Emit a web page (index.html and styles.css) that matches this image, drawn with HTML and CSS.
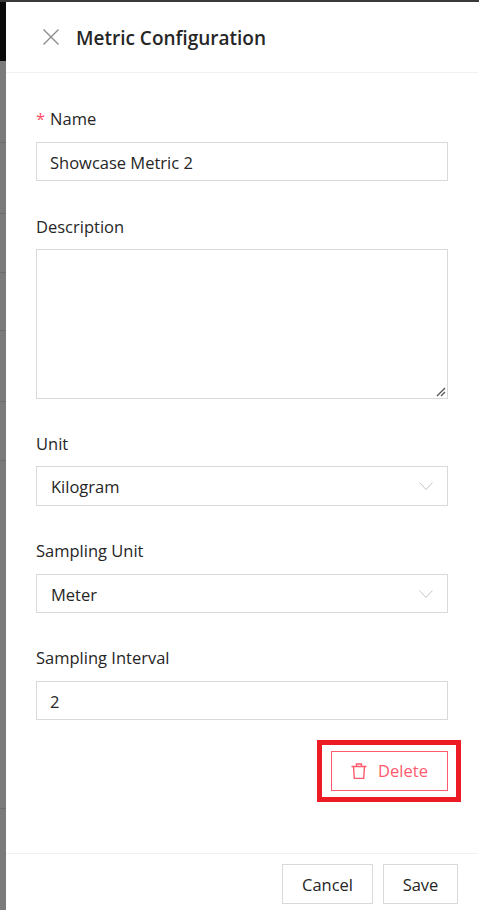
FILE: index.html
```html
<!DOCTYPE html>
<html lang="en">
<head>
<meta charset="utf-8">
<title>Metric Configuration</title>
<link rel="stylesheet" href="styles.css">
</head>
<body>
<div class="backdrop">
  <div class="backdrop-top"></div>
  <div class="backdrop-row r1"></div>
  <div class="backdrop-row r2"></div>
  <div class="backdrop-row r3"></div>
  <div class="backdrop-row r4"></div>
  <div class="backdrop-row r5"></div>
  <div class="backdrop-row r6"></div>
  <div class="backdrop-row r7"></div>
</div>
<aside class="panel">
  <header class="panel-head">
    <svg class="close" viewBox="0 0 16 16" width="16" height="16"><path d="M.5.5l15 15M15.500.5l-15 15" fill="none" stroke="#8c8c8c" stroke-width="1.400"/></svg>
    <h1>Metric Configuration</h1>
  </header>
  <form class="form">
    <div class="field">
      <label><span class="req">*</span>Name</label>
      <div class="control">Showcase Metric 2</div>
    </div>
    <div class="field">
      <label>Description</label>
      <div class="control area">
        <svg class="grip" viewBox="0 0 10 10" width="10" height="10"><path d="M1 9l8-8M5 9l4-4" fill="none" stroke="#555" stroke-width="1.300"/></svg>
      </div>
    </div>
    <div class="field">
      <label>Unit</label>
      <div class="control select">Kilogram
        <svg class="chev" viewBox="0 0 14 8" width="14" height="8"><path d="M.5.500l6.500 7 6.500-7" fill="none" stroke="#c4c4c4" stroke-width="1"/></svg>
      </div>
    </div>
    <div class="field">
      <label>Sampling Unit</label>
      <div class="control select">Meter
        <svg class="chev" viewBox="0 0 14 8" width="14" height="8"><path d="M.5.500l6.500 7 6.500-7" fill="none" stroke="#c4c4c4" stroke-width="1"/></svg>
      </div>
    </div>
    <div class="field last">
      <label>Sampling Interval</label>
      <div class="control">2</div>
    </div>
    <div class="delete-row">
      <button type="button" class="btn danger">
        <svg viewBox="0 0 16 16" width="16" height="16"><path d="M.5 3.500h15M5.500 3.500V1h5v2.500M2.500 3.500l.8 12h9.400l.8-12" fill="none" stroke="#ff5a6e" stroke-width="1.400"/></svg>
        Delete
      </button>
      <div class="annotation"></div>
    </div>
  </form>
  <footer class="panel-foot">
    <button type="button" class="btn cancel">Cancel</button>
    <button type="button" class="btn save">Save</button>
  </footer>
</aside>
</body>
</html>
```
FILE: styles.css
```css
* { box-sizing: border-box; }
html, body { margin: 0; height: 910px; overflow: hidden; }
body {
  display: flex;
  font-family: "Open Sans", "Noto Sans", sans-serif;
  font-size: 16.500px;
  color: #262626;
  background: #fff;
}
body::before {
  content: "";
  position: absolute;
  left: 0; top: 0; right: 0;
  height: 2px;
  background: #3a3a3a;
}
.backdrop {
  width: 6px;
  flex: none;
  background: #7b7b7b;
}
.backdrop-top { height: 61px; background: #0a0a0a; }
.backdrop-row { border-bottom: 1px solid #6c6c6c; }
.r1 { height: 82px; }
.r2 { height: 71px; }
.r3 { height: 59px; }
.r4 { height: 58px; }
.r5 { height: 71px; }
.r6 { height: 59px; }
.r7 { height: 348px; }
.panel {
  width: 472px;
  flex: none;
  height: 908px;
  margin-top: 2px;
  background: #fff;
  display: flex;
  flex-direction: column;
}
.panel-head {
  height: 71px;
  flex: none;
  display: flex;
  align-items: center;
  padding-left: 37px;
  border-bottom: 1px solid #f0f0f0;
}
.close { margin-right: 17px; }
h1 { margin: 2px 0 0; font-size: 19px; font-weight: 600; color: #262626; }
.form { flex: 1; padding: 33.300px 30px 0; }
.field { margin-bottom: 32.300px; }
.field label { display: block; height: 24px; line-height: 26px; margin-bottom: 11.500px; }
.req { color: #ff4d64; margin-right: 5px; }
.control {
  position: relative;
  height: 39.500px;
  line-height: 39px;
  padding: 0 13px;
  border: 1px solid #d9d9d9;
  background: #fff;
}
.area { height: 149.500px; }
.select { padding: 0 14px; }
.grip { position: absolute; right: 1px; bottom: 1px; }
.select .chev { position: absolute; right: 14px; top: 15px; }
.last { margin-bottom: 30.500px; }
.delete-row { position: relative; display: flex; justify-content: flex-end; }
.btn {
  font: inherit;
  height: 40px;
  background: #fff;
  border: 1px solid #d9d9d9;
  color: #262626;
  padding: 0;
}
.danger {
  width: 117px;
  border-color: #ff5a6e;
  color: #ff5a6e;
  display: flex;
  align-items: center;
  justify-content: center;
  gap: 11px;
}
.annotation {
  position: absolute;
  left: 281px; top: -11px;
  width: 144px; height: 62px;
  border: 5px solid #ed1c24;
}
.panel-foot {
  height: 57px;
  flex: none;
  border-top: 1px solid #f0f0f0;
  display: flex;
  justify-content: flex-end;
  gap: 10px;
  padding: 10px 20px 0 0;
}
.cancel { width: 91px; }
.save { width: 75px; }
```
